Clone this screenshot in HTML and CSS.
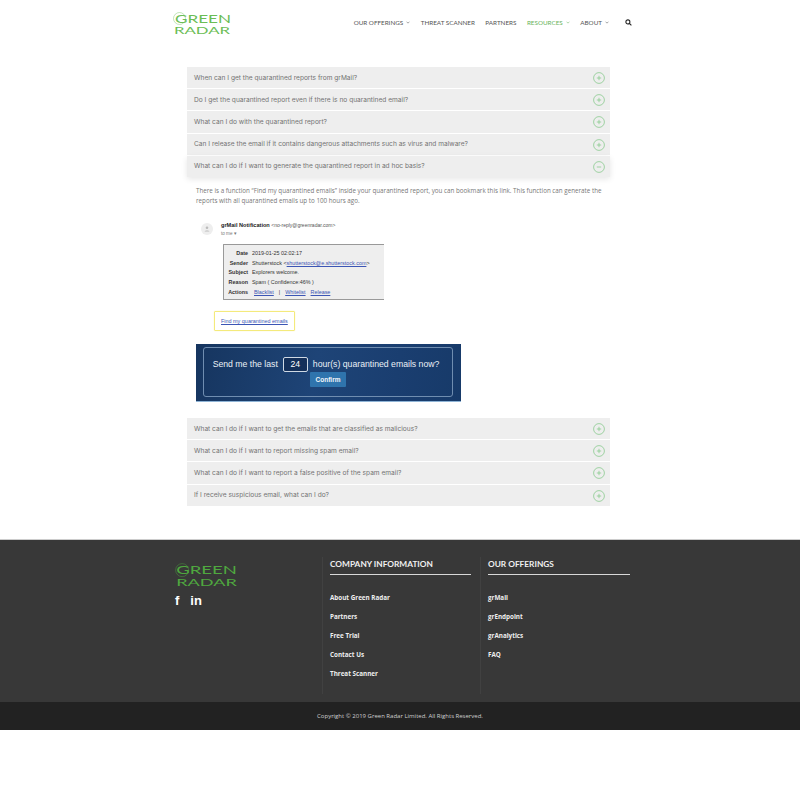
FILE: index.html
```html
<!DOCTYPE html>
<html lang="en">
<head>
<meta charset="utf-8">
<title>Green Radar FAQ</title>
<link rel="stylesheet" href="styles.css">
</head>
<body>
<header class="site-header">
  <svg class="logo" viewBox="0 0 58 24"><circle class="logo-ring" cx="6.500" cy="7.500" r="6"/><text x="2" y="11.500" font-size="11" textLength="56" lengthAdjust="spacingAndGlyphs">GREEN</text><text x="1" y="22.500" font-size="9.500" textLength="56" lengthAdjust="spacingAndGlyphs">RADAR</text></svg>
  <nav class="nav">
    <a class="nav-item">OUR OFFERINGS<svg class="chev" viewBox="0 0 6 4"><path d="M.8.8 3 3 5.200.8"/></svg></a>
    <a class="nav-item">THREAT SCANNER</a>
    <a class="nav-item">PARTNERS</a>
    <a class="nav-item active">RESOURCES<svg class="chev" viewBox="0 0 6 4"><path d="M.8.8 3 3 5.200.8"/></svg></a>
    <a class="nav-item">ABOUT<svg class="chev" viewBox="0 0 6 4"><path d="M.8.8 3 3 5.200.8"/></svg></a>
    <svg class="search" viewBox="0 0 8 8"><circle cx="3.300" cy="3.300" r="2.300"/><path d="M5 5 7.300 7.300"/></svg>
  </nav>
</header>

<main class="faq">
  <div class="acc">
    <div class="acc-row"><span>When can I get the quarantined reports from grMail?</span><svg class="tog" viewBox="0 0 12 12"><circle cx="6" cy="6" r="5.400"/><path d="M6 3.800v4.400M3.800 6h4.400"/></svg></div>
    <div class="acc-row"><span>Do I get the quarantined report even if there is no quarantined email?</span><svg class="tog" viewBox="0 0 12 12"><circle cx="6" cy="6" r="5.400"/><path d="M6 3.800v4.400M3.800 6h4.400"/></svg></div>
    <div class="acc-row"><span>What can I do with the quarantined report?</span><svg class="tog" viewBox="0 0 12 12"><circle cx="6" cy="6" r="5.400"/><path d="M6 3.800v4.400M3.800 6h4.400"/></svg></div>
    <div class="acc-row"><span>Can I release the email if it contains dangerous attachments such as virus and malware?</span><svg class="tog" viewBox="0 0 12 12"><circle cx="6" cy="6" r="5.400"/><path d="M6 3.800v4.400M3.800 6h4.400"/></svg></div>
    <div class="acc-row open"><span>What can I do if I want to generate the quarantined report in ad hoc basis?</span><svg class="tog" viewBox="0 0 12 12"><circle cx="6" cy="6" r="5.400"/><path d="M3.800 6h4.400"/></svg></div>
  </div>

  <div class="answer">
    <p class="answer-text">There is a function “Find my quarantined emails” inside your quarantined report, you can bookmark this link. This function can generate the reports with all quarantined emails up to 100 hours ago.</p>

    <div class="mail">
      <div class="mail-head">
        <svg class="avatar" viewBox="0 0 12 12"><circle class="av-bg" cx="6" cy="6" r="6"/><circle class="av-fg" cx="6" cy="4.800" r="1.300"/><path class="av-fg" d="M3.500 8.500c.3-1.500 4.700-1.500 5 0z"/></svg>
        <div>
          <div class="mail-from"><b>grMail Notification</b> <small>&lt;no-reply@greenradar.com&gt;</small></div>
          <div class="mail-to">to me ▾</div>
        </div>
      </div>
      <div class="report">
        <div class="r-row"><b>Date</b><span>2019-01-25 02:02:17</span></div>
        <div class="r-row"><b>Sender</b><span>Shutterstock &lt;<u>shutterstock@e.shutterstock.com</u>&gt;</span></div>
        <div class="r-row"><b>Subject</b><span>Explorers welcome.</span></div>
        <div class="r-row"><b>Reason</b><span>Spam ( Confidence:46% )</span></div>
        <div class="r-row"><b>Actions</b><span class="r-actions"><u>Blacklist</u><i>|</i><u>Whitelist</u><u>Release</u></span></div>
      </div>
      <div class="find-box"><u>Find my quarantined emails</u></div>
    </div>

    <div class="banner">
      <div class="banner-frame">
        <div class="banner-line"><span>Send me the last</span><span class="hours">24</span><span>hour(s) quarantined emails now?</span></div>
        <span class="confirm">Confirm</span>
      </div>
    </div>
  </div>

  <div class="acc">
    <div class="acc-row"><span>What can I do if I want to get the emails that are classified as malicious?</span><svg class="tog" viewBox="0 0 12 12"><circle cx="6" cy="6" r="5.400"/><path d="M6 3.800v4.400M3.800 6h4.400"/></svg></div>
    <div class="acc-row"><span>What can I do if I want to report missing spam email?</span><svg class="tog" viewBox="0 0 12 12"><circle cx="6" cy="6" r="5.400"/><path d="M6 3.800v4.400M3.800 6h4.400"/></svg></div>
    <div class="acc-row"><span>What can I do if I want to report a false positive of the spam email?</span><svg class="tog" viewBox="0 0 12 12"><circle cx="6" cy="6" r="5.400"/><path d="M6 3.800v4.400M3.800 6h4.400"/></svg></div>
    <div class="acc-row"><span>If I receive suspicious email, what can I do?</span><svg class="tog" viewBox="0 0 12 12"><circle cx="6" cy="6" r="5.400"/><path d="M6 3.800v4.400M3.800 6h4.400"/></svg></div>
  </div>
</main>

<footer class="site-footer">
  <div class="foot-main">
    <div class="foot-brand">
      <svg class="logo logo-foot" viewBox="0 0 58 24"><circle class="logo-ring" cx="6.500" cy="7.500" r="6"/><text x="1" y="11.500" font-size="11" textLength="56" lengthAdjust="spacingAndGlyphs">GREEN</text><text x="1" y="22.500" font-size="9.500" textLength="56" lengthAdjust="spacingAndGlyphs">RADAR</text></svg>
      <div class="social"><span class="fb">f</span><span class="li">in</span></div>
    </div>
    <div class="foot-col foot-col-first">
      <h3>COMPANY INFORMATION</h3>
      <ul>
        <li>About Green Radar</li>
        <li>Partners</li>
        <li>Free Trial</li>
        <li>Contact Us</li>
        <li>Threat Scanner</li>
      </ul>
    </div>
    <div class="foot-col">
      <h3>OUR OFFERINGS</h3>
      <ul>
        <li>grMail</li>
        <li>grEndpoint</li>
        <li>grAnalytics</li>
        <li>FAQ</li>
      </ul>
    </div>
  </div>
  <div class="copyright">Copyright © 2019 Green Radar Limited. All Rights Reserved.</div>
</footer>
</body>
</html>
```
FILE: styles.css
```css
* { box-sizing: border-box; }
html, body { margin: 0; padding: 0; background: #fff; }
body { font-family: "Open Sans", sans-serif; color: #666; }
b { font-weight: 700; }

.site-header {
  height: 45px;
  display: flex;
  align-items: center;
  justify-content: space-between;
  padding: 0 168px 0 173px;
}
.logo { width: 58px; height: 24px; display: block; overflow: visible; font-family: "Lato", sans-serif; font-weight: 400; fill: #6bbd55; }
.logo-ring { fill: none; stroke: #6bbd55; stroke-width: .4; }

.nav { display: flex; align-items: center; font-family: "Lato", sans-serif; font-size: 6.300px; color: #555; }
.nav-item { display: flex; align-items: center; margin-left: 10.500px; white-space: nowrap; }
.nav-item.active { color: #68b35c; }
.chev { width: 4px; height: 3px; margin-left: 3px; fill: none; stroke: currentColor; stroke-width: .8; }
.search { width: 7px; height: 7px; margin-left: 16px; fill: none; stroke: #222; stroke-width: 1.200; }

.faq { padding: 22px 190px 33px 187px; }
.acc { display: flex; flex-direction: column; gap: 1px; }
.acc-row {
  height: 21.200px;
  background: #eeeeee;
  display: flex;
  align-items: center;
  justify-content: space-between;
  padding: 0 5.500px 0 7px;
  font-family: "Inter", sans-serif;
  font-size: 6.600px;
  color: #737373;
}
.acc-row.open { box-shadow: 0 2px 6px rgba(0,0,0,.1); }
.tog { width: 12px; height: 12px; flex: none; margin-top: 1px; fill: none; stroke: #7cc583; stroke-width: .7; }

.answer { padding: 9px 4px 16px 9px; }
.answer-text { margin: 0; font-size: 6.250px; line-height: 10px; color: #777; }

.mail { margin: 15px 0 13px 0; }
.mail-head { display: flex; align-items: center; gap: 8px; padding-left: 5px; }
.avatar { width: 12px; height: 12px; flex: none; }
.av-bg { fill: #eeeeee; }
.av-fg { fill: #bbbbbb; }
.mail-from { font-family: "Liberation Sans", sans-serif; font-size: 5.600px; line-height: 9px; color: #222; }
.mail-from small { font-size: 5px; color: #555; }
.mail-to { font-family: "Liberation Sans", sans-serif; font-size: 4.600px; line-height: 7px; color: #777; }
.report {
  margin: 7px 0 0 27px;
  width: 161px;
  height: 56px;
  background: #eeeeee;
  border: 1px solid #999;
  border-right: 0;
  border-bottom-width: 1.500px;
  border-radius: 1px 0 0 1px;
  padding: 3.500px 0 0 0;
  font-family: "Liberation Sans", sans-serif;
  font-size: 5.400px;
  color: #333;
}
.r-row { display: flex; height: 9.600px; align-items: center; }
.r-row b { width: 24px; text-align: right; margin-right: 4px; flex: none; }
.r-row u { color: #3b55b5; }
.r-actions { display: flex; gap: 5px; padding-left: 2px; }
.r-actions i { font-style: normal; }
.find-box {
  margin: 11px 0 0 18px;
  width: 81px;
  height: 20px;
  border: 1.200px solid #f4ea7c;
  border-radius: 1px;
  display: flex;
  align-items: center;
  padding-left: 6px;
  font-family: "Liberation Sans", sans-serif;
  font-size: 5.450px;
  color: #3b55b5;
  box-shadow: 0 0 1px #f4ea7c;
}

.banner {
  width: 265px;
  height: 58px;
  background: linear-gradient(100deg, #16355f 0%, #1e4477 45%, #1a3e70 75%, #173a69 100%);
  border-bottom: 1px solid #8fb4d6;
  padding: 3px 8px 0 7px;
}
.banner-frame {
  height: 50px;
  border: 1px solid #6f8db0;
  border-radius: 3px;
  display: flex;
  flex-direction: column;
  align-items: center;
  padding-top: 9px;
  font-family: "Liberation Sans", sans-serif;
  color: #eaf0f6;
  font-size: 8.700px;
}
.banner-line { display: flex; align-items: center; gap: 5px; height: 15px; margin-right: 4px; white-space: nowrap; }
.hours {
  width: 25px;
  height: 15px;
  border: 1px solid #cfd9e4;
  border-radius: 2px;
  background: #14305a;
  text-align: center;
  line-height: 13px;
  color: #fff;
}
.confirm {
  width: 36px;
  height: 15px;
  background: #2f74ad;
  border-radius: 1px;
  text-align: center;
  line-height: 15px;
  font-size: 6.500px;
  font-weight: 700;
  color: #f2f6fa;
}

.site-footer { background: #383838; border-top: 1px solid #ccc; }
.foot-main { height: 162px; display: grid; grid-template-columns: 147px 158px 150px; padding: 17px 0 0 175px; }
.foot-brand { padding-top: 5px; }
.logo-foot { width: 63px; height: 26px; fill: #4fa83f; }
.logo-foot .logo-ring { stroke: #4fa83f; }
.social { display: flex; align-items: center; margin-top: 6px; color: #fff; font-family: "Liberation Sans", sans-serif; font-weight: 700; font-size: 13px; line-height: 13px; }
.li { margin-left: 11px; }
.foot-col { height: 137px; padding-left: 7px; border-left: 1px solid #414141; }
.foot-col-first { padding-right: 9px; }
.foot-col h3 {
  margin: 0;
  height: 18px;
  border-bottom: 1px solid #d8d8d8;
  font-family: "Lato", sans-serif;
  font-weight: 700;
  font-size: 8.300px;
  line-height: 14px;
  color: #f0f0f0;
}
.foot-col ul { list-style: none; margin: 0; padding: 13px 0 0; }
.foot-col li { height: 19.200px; font-size: 6.300px; line-height: 19.200px; font-weight: 700; color: #eee; white-space: nowrap; }
.copyright { height: 28px; background: #222222; text-align: center; font-size: 6px; line-height: 28px; color: #cfcfcf; }
```
